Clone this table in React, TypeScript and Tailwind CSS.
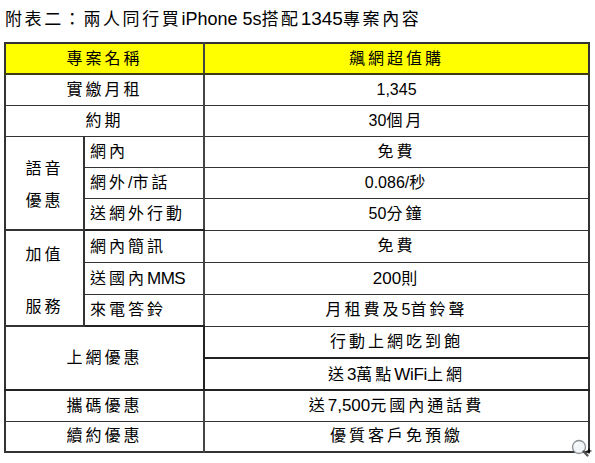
import React from "react";

const FONT = '"Liberation Sans", "Noto Sans CJK TC", sans-serif';

// split text into CJK and Latin runs so only CJK gets the wide spacing
const T = ({ s, latin = "text-[16px]", cjk = "tracking-[3px]" }: { s: string; latin?: string; cjk?: string }) => {
  const parts = s.match(/[A-Za-z0-9.,/ ]+|[^A-Za-z0-9.,/ ]+/g) || [];
  return (
    <>
      {parts.map((p, i) =>
        /[A-Za-z0-9]/.test(p) || p === "/" ? (
          <span key={i} className={latin}>
            {p}
          </span>
        ) : (
          <span key={i} className={cjk}>
            {p}
          </span>
        )
      )}
    </>
  );
};

const td = "border border-[#333] px-[5px] py-0 align-middle";

const Magnifier = () => (
  <svg width="22" height="20" viewBox="0 0 22 20" className="absolute right-[2px] bottom-[4px]">
    <circle cx="8" cy="8" r="6.5" fill="#f3f6f8" stroke="#8a9096" strokeWidth="1.3" />
    <path d="M4.5 6.5 A4 4 0 0 1 8 4" stroke="#ffffff" strokeWidth="1.5" fill="none" />
    <path d="M12.5 12.5 L16.5 16.5" stroke="#555" strokeWidth="2.4" strokeLinecap="round" />
    <path d="M18 9.5 v5 M15.5 12 h5" stroke="#000" strokeWidth="1.2" />
  </svg>
);

export default function App() {
  return (
    <div className="w-[595px] h-[463px] bg-white text-black relative" style={{ fontFamily: FONT }}>
      <div className="pt-[8px] pl-[5px] h-[42px] text-[17px] leading-[22px]">
        <T s="附表二：兩人同行買" cjk="tracking-[2.6px]" />
        <span className="text-[18px]">iPhone 5s</span>
        <T s="搭配" cjk="tracking-[2.6px]" />
        <span className="text-[19px]">1345</span>
        <T s="專案內容" cjk="tracking-[2.6px]" />
      </div>
      <div className="pl-[4px]">
        <table className="border-collapse table-fixed w-[584px] text-[16px] leading-none border-2 border-[#333]">
          <colgroup>
            <col className="w-[79px]" />
            <col className="w-[120px]" />
            <col className="w-[385px]" />
          </colgroup>
          <tbody>
            <tr className="h-[31px] bg-[#ffff00]">
              <td colSpan={2} className={`${td} text-center border-b-2 border-b-[#3d3d10]`}>
                <T s="專案名稱" />
              </td>
              <td className={`${td} text-center border-b-2 border-b-[#3d3d10] border-l-2 border-l-[#444]`}>
                <T s="飆網超值購" />
              </td>
            </tr>
            <tr className="h-[31px]">
              <td colSpan={2} className={`${td} text-center`}>
                <T s="實繳月租" />
              </td>
              <td className={`${td} text-center border-l-2 border-l-[#444]`}>1,345</td>
            </tr>
            <tr className="h-[31px]">
              <td colSpan={2} className={`${td} text-center`}>
                <T s="約期" />
              </td>
              <td className={`${td} text-center border-l-2 border-l-[#444]`}>
                <T s="30個月" />
              </td>
            </tr>
            <tr className="h-[31px]">
              <td rowSpan={3} className={`${td} text-center border-r-2 border-b-2 border-[#222] leading-[32px] pt-[4px]`}>
                <div>
                  <T s="語音" />
                </div>
                <div>
                  <T s="優惠" />
                </div>
              </td>
              <td className={td}>
                <T s="網內" />
              </td>
              <td className={`${td} text-center border-l-2 border-l-[#444]`}>
                <T s="免費" />
              </td>
            </tr>
            <tr className="h-[31px]">
              <td className={td}>
                <T s="網外/市話" />
              </td>
              <td className={`${td} text-center border-l-2 border-l-[#444]`}>
                <T s="0.086/秒" />
              </td>
            </tr>
            <tr className="h-[32px]">
              <td className={`${td} border-b-2 border-b-[#222]`}>
                <T s="送網外行動" />
              </td>
              <td className={`${td} text-center border-l-2 border-l-[#444]`}>
                <T s="50分鐘" />
              </td>
            </tr>
            <tr className="h-[32px]">
              <td rowSpan={3} className={`${td} text-center border-r-2 border-b-2 border-[#222] p-0`}>
                <div className="flex flex-col justify-between h-[94px] pt-[16px] pb-[10px]">
                  <div>
                    <T s="加值" />
                  </div>
                  <div>
                    <T s="服務" />
                  </div>
                </div>
              </td>
              <td className={td}>
                <T s="網內簡訊" />
              </td>
              <td className={`${td} text-center border-l-2 border-l-[#444]`}>
                <T s="免費" />
              </td>
            </tr>
            <tr className="h-[31px]">
              <td className={td}>
                <T s="送國內MMS" latin="text-[17px] tracking-[-0.5px]" />
              </td>
              <td className={`${td} text-center border-l-2 border-l-[#444]`}>
                <T s="200則" latin="text-[17px]" />
              </td>
            </tr>
            <tr className="h-[31px]">
              <td className={`${td} border-b-2 border-b-[#222]`}>
                <T s="來電答鈴" />
              </td>
              <td className={`${td} text-center border-l-2 border-l-[#444]`}>
                <T s="月租費及5首鈴聲" />
              </td>
            </tr>
            <tr className="h-[32px]">
              <td rowSpan={2} colSpan={2} className={`${td} text-center border-b-2 border-b-[#222]`}>
                <T s="上網優惠" />
              </td>
              <td className={`${td} text-center border-l-2 border-l-[#222]`}>
                <T s="行動上網吃到飽" />
              </td>
            </tr>
            <tr className="h-[32px]">
              <td className={`${td} text-center border-l-2 border-l-[#222] border-t-2 border-t-[#222] border-b-2 border-b-[#222]`}>
                <T s="送3萬點WiFi上網" latin="text-[17px] tracking-[-0.3px]" />
              </td>
            </tr>
            <tr className="h-[31px]">
              <td colSpan={2} className={`${td} text-center`}>
                <T s="攜碼優惠" />
              </td>
              <td className={`${td} text-center border-l-2 border-l-[#444]`}>
                <T s="送7,500元國內通話費" latin="text-[17px]" />
              </td>
            </tr>
            <tr className="h-[31px]">
              <td colSpan={2} className={`${td} text-center`}>
                <T s="續約優惠" />
              </td>
              <td className={`${td} text-center border-l-2 border-l-[#444]`}>
                <T s="優質客戶免預繳" />
              </td>
            </tr>
          </tbody>
        </table>
      </div>
      <Magnifier />
    </div>
  );
}
